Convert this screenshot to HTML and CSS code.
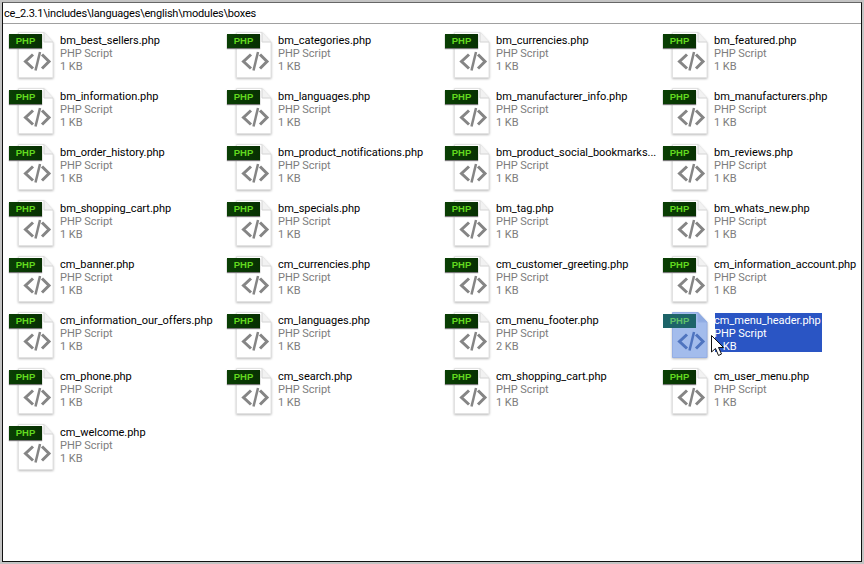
FILE: index.html
```html
<!DOCTYPE html>
<html lang="en">
<head>
  <meta charset="UTF-8" />
  <title>boxes</title>
  <link rel="stylesheet" href="styles.css">
</head>
<body>
  <svg class="defs" width="0" height="0" aria-hidden="true">
    <symbol id="php-page" viewBox="0 0 36 47">
      <path d="M0.5 0.5H26L35 10V45.5H0.5Z" class="sheet"/>
      <path d="M26 0.5V10H35" class="fold"/>
      <path d="M15 22.5L7.5 29.5L15 36.5M24 22.5L31 29.5L24 36.5" class="code"/>
      <path d="M22 20L17.5 38.5" class="code slash"/>
    </symbol>
  </svg>
  <div class="window">
    <div class="path-bar"><span class="path-text">ce_2.3.1\includes\languages\english\modules\boxes</span></div>
    <div class="files">
      <div class="file"><div class="icon"><svg class="page"><use href="#php-page"/></svg><span class="badge">PHP</span></div><div class="info"><div class="name">bm_best_sellers.php</div><div class="type">PHP Script</div><div class="size">1 KB</div></div></div>
      <div class="file"><div class="icon"><svg class="page"><use href="#php-page"/></svg><span class="badge">PHP</span></div><div class="info"><div class="name">bm_categories.php</div><div class="type">PHP Script</div><div class="size">1 KB</div></div></div>
      <div class="file"><div class="icon"><svg class="page"><use href="#php-page"/></svg><span class="badge">PHP</span></div><div class="info"><div class="name">bm_currencies.php</div><div class="type">PHP Script</div><div class="size">1 KB</div></div></div>
      <div class="file"><div class="icon"><svg class="page"><use href="#php-page"/></svg><span class="badge">PHP</span></div><div class="info"><div class="name">bm_featured.php</div><div class="type">PHP Script</div><div class="size">1 KB</div></div></div>
      <div class="file"><div class="icon"><svg class="page"><use href="#php-page"/></svg><span class="badge">PHP</span></div><div class="info"><div class="name">bm_information.php</div><div class="type">PHP Script</div><div class="size">1 KB</div></div></div>
      <div class="file"><div class="icon"><svg class="page"><use href="#php-page"/></svg><span class="badge">PHP</span></div><div class="info"><div class="name">bm_languages.php</div><div class="type">PHP Script</div><div class="size">1 KB</div></div></div>
      <div class="file"><div class="icon"><svg class="page"><use href="#php-page"/></svg><span class="badge">PHP</span></div><div class="info"><div class="name">bm_manufacturer_info.php</div><div class="type">PHP Script</div><div class="size">1 KB</div></div></div>
      <div class="file"><div class="icon"><svg class="page"><use href="#php-page"/></svg><span class="badge">PHP</span></div><div class="info"><div class="name">bm_manufacturers.php</div><div class="type">PHP Script</div><div class="size">1 KB</div></div></div>
      <div class="file"><div class="icon"><svg class="page"><use href="#php-page"/></svg><span class="badge">PHP</span></div><div class="info"><div class="name">bm_order_history.php</div><div class="type">PHP Script</div><div class="size">1 KB</div></div></div>
      <div class="file"><div class="icon"><svg class="page"><use href="#php-page"/></svg><span class="badge">PHP</span></div><div class="info"><div class="name">bm_product_notifications.php</div><div class="type">PHP Script</div><div class="size">1 KB</div></div></div>
      <div class="file"><div class="icon"><svg class="page"><use href="#php-page"/></svg><span class="badge">PHP</span></div><div class="info"><div class="name">bm_product_social_bookmarks...</div><div class="type">PHP Script</div><div class="size">1 KB</div></div></div>
      <div class="file"><div class="icon"><svg class="page"><use href="#php-page"/></svg><span class="badge">PHP</span></div><div class="info"><div class="name">bm_reviews.php</div><div class="type">PHP Script</div><div class="size">1 KB</div></div></div>
      <div class="file"><div class="icon"><svg class="page"><use href="#php-page"/></svg><span class="badge">PHP</span></div><div class="info"><div class="name">bm_shopping_cart.php</div><div class="type">PHP Script</div><div class="size">1 KB</div></div></div>
      <div class="file"><div class="icon"><svg class="page"><use href="#php-page"/></svg><span class="badge">PHP</span></div><div class="info"><div class="name">bm_specials.php</div><div class="type">PHP Script</div><div class="size">1 KB</div></div></div>
      <div class="file"><div class="icon"><svg class="page"><use href="#php-page"/></svg><span class="badge">PHP</span></div><div class="info"><div class="name">bm_tag.php</div><div class="type">PHP Script</div><div class="size">1 KB</div></div></div>
      <div class="file"><div class="icon"><svg class="page"><use href="#php-page"/></svg><span class="badge">PHP</span></div><div class="info"><div class="name">bm_whats_new.php</div><div class="type">PHP Script</div><div class="size">1 KB</div></div></div>
      <div class="file"><div class="icon"><svg class="page"><use href="#php-page"/></svg><span class="badge">PHP</span></div><div class="info"><div class="name">cm_banner.php</div><div class="type">PHP Script</div><div class="size">1 KB</div></div></div>
      <div class="file"><div class="icon"><svg class="page"><use href="#php-page"/></svg><span class="badge">PHP</span></div><div class="info"><div class="name">cm_currencies.php</div><div class="type">PHP Script</div><div class="size">1 KB</div></div></div>
      <div class="file"><div class="icon"><svg class="page"><use href="#php-page"/></svg><span class="badge">PHP</span></div><div class="info"><div class="name">cm_customer_greeting.php</div><div class="type">PHP Script</div><div class="size">1 KB</div></div></div>
      <div class="file"><div class="icon"><svg class="page"><use href="#php-page"/></svg><span class="badge">PHP</span></div><div class="info"><div class="name">cm_information_account.php</div><div class="type">PHP Script</div><div class="size">1 KB</div></div></div>
      <div class="file"><div class="icon"><svg class="page"><use href="#php-page"/></svg><span class="badge">PHP</span></div><div class="info"><div class="name">cm_information_our_offers.php</div><div class="type">PHP Script</div><div class="size">1 KB</div></div></div>
      <div class="file"><div class="icon"><svg class="page"><use href="#php-page"/></svg><span class="badge">PHP</span></div><div class="info"><div class="name">cm_languages.php</div><div class="type">PHP Script</div><div class="size">1 KB</div></div></div>
      <div class="file"><div class="icon"><svg class="page"><use href="#php-page"/></svg><span class="badge">PHP</span></div><div class="info"><div class="name">cm_menu_footer.php</div><div class="type">PHP Script</div><div class="size">2 KB</div></div></div>
      <div class="file selected"><div class="icon"><svg class="page"><use href="#php-page"/></svg><span class="badge">PHP</span></div><div class="info"><div class="name">cm_menu_header.php</div><div class="type">PHP Script</div><div class="size">1 KB</div></div>
        <svg class="cursor" width="13" height="22" viewBox="0 0 13 22"><path d="M0.5 0.5V17L4.5 13.5L7.5 20.5L10.5 19L7.5 12.5H12.5Z"/></svg>
      </div>
      <div class="file"><div class="icon"><svg class="page"><use href="#php-page"/></svg><span class="badge">PHP</span></div><div class="info"><div class="name">cm_phone.php</div><div class="type">PHP Script</div><div class="size">1 KB</div></div></div>
      <div class="file"><div class="icon"><svg class="page"><use href="#php-page"/></svg><span class="badge">PHP</span></div><div class="info"><div class="name">cm_search.php</div><div class="type">PHP Script</div><div class="size">1 KB</div></div></div>
      <div class="file"><div class="icon"><svg class="page"><use href="#php-page"/></svg><span class="badge">PHP</span></div><div class="info"><div class="name">cm_shopping_cart.php</div><div class="type">PHP Script</div><div class="size">1 KB</div></div></div>
      <div class="file"><div class="icon"><svg class="page"><use href="#php-page"/></svg><span class="badge">PHP</span></div><div class="info"><div class="name">cm_user_menu.php</div><div class="type">PHP Script</div><div class="size">1 KB</div></div></div>
      <div class="file"><div class="icon"><svg class="page"><use href="#php-page"/></svg><span class="badge">PHP</span></div><div class="info"><div class="name">cm_welcome.php</div><div class="type">PHP Script</div><div class="size">1 KB</div></div></div>
    </div>
  </div>
</body>
</html>
```

FILE: styles.css
```css
* {
  box-sizing: border-box;
  margin: 0;
  padding: 0;
}
html, body {
  width: 864px;
  height: 564px;
  overflow: hidden;
}
body {
  background: #c4c4c4;
  padding: 2px;
  font-family: Roboto, "Liberation Sans", sans-serif;
  font-size: 11px;
  letter-spacing: -0.03px;
  color: #000;
}
.defs {
  position: absolute;
}
.window {
  height: 560px;
  background: #fff;
  border: 1px solid #111;
  border-top-color: #666;
  display: flex;
  flex-direction: column;
}

/* Path bar */
.path-bar {
  height: 21px;
  padding-left: 1px;
  border-bottom: 1px solid #a0a0a0;
  line-height: 21px;
  letter-spacing: -0.2px;
  white-space: nowrap;
}

/* File grid */
.files {
  display: grid;
  grid-template-columns: repeat(4, 218px);
  grid-auto-rows: 56px;
  padding: 8px 0 0 5px;
}
.file {
  display: flex;
  position: relative;
}
.icon {
  width: 52px;
  height: 48px;
  flex-shrink: 0;
  position: relative;
}
.page {
  position: absolute;
  left: 10px;
  top: 0;
  width: 36px;
  height: 47px;
  filter: drop-shadow(0 1px 1px #bbb);
}
.sheet {
  fill: var(--sheet, #fff);
  stroke: var(--edge, #e2e2e2);
}
.fold {
  fill: var(--fold, #f2f2f2);
  stroke: var(--edge, #d4d4d4);
}
.code {
  fill: none;
  stroke: var(--code, #858585);
  stroke-width: 3;
}
.slash {
  stroke-width: 2.5;
}
.badge {
  position: absolute;
  left: 1px;
  top: 2px;
  width: 33px;
  height: 14px;
  background: linear-gradient(90deg, #0a3f04, #073002);
  box-shadow: 0 1px 1px #777;
  color: #62d81f;
  font-family: "Liberation Sans", sans-serif;
  font-size: 9.5px;
  font-weight: bold;
  letter-spacing: 0;
  line-height: 14px;
  text-align: center;
}
.info {
  line-height: 13px;
  padding-top: 2px;
  white-space: nowrap;
}
.type, .size {
  color: #7d7d7d;
}

/* Selected item */
.selected {
  --sheet: #a3bcec;
  --fold: #8fabe2;
  --edge: #94aee4;
  --code: #4f74bf;
}
.selected .badge {
  background: #1d6468;
  box-shadow: none;
  color: #5fc06a;
}
.selected .info {
  align-self: flex-start;
  margin-left: 1px;
  text-indent: -1px;
  background: #2a55c4;
  color: #fff;
  width: 107px;
  height: 39px;
  margin-top: 1px;
  padding-top: 1px;
}
.selected .type, .selected .size {
  color: #fff;
}
.cursor {
  position: absolute;
  left: 49px;
  top: 23px;
  fill: #fff;
  stroke: #111;
}
```
